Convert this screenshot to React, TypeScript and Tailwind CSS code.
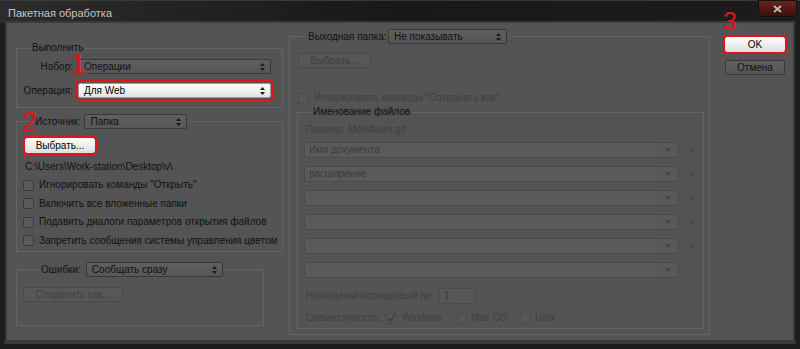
import React from "react";

const FONT = '"Liberation Sans", Arial, sans-serif';

function UpDown() {
  return (
    <svg width="5" height="8" viewBox="0 0 5 8">
      <path d="M2.5 0 L5 3 H0 Z M2.5 8 L5 5 H0 Z" fill="#1a1a1a" />
    </svg>
  );
}

function Down() {
  return (
    <svg width="6" height="4" viewBox="0 0 6 4">
      <path d="M0 0 H6 L3 4 Z" fill="#444444" />
    </svg>
  );
}

function Sel({ text, white, className }: { text: string; white?: boolean; className: string }) {
  return (
    <div
      className={
        white
          ? `h-[15px] flex items-center justify-between pl-[5px] pr-[5px] rounded-[2px] border border-[#9a9a9a] bg-linear-to-b from-[#ffffff] to-[#e2e2e2] text-black ${className}`
          : `h-[15px] flex items-center justify-between pl-[5px] pr-[5px] rounded-[2px] border border-[#383838] bg-linear-to-b from-[#5f5f5f] to-[#575757] text-[#111111] ${className}`
      }
    >
      <span className="leading-[12px] whitespace-nowrap">{text}</span>
      <UpDown />
    </div>
  );
}

function DSel({ text }: { text?: string }) {
  return (
    <div className="h-[16px] w-[375px] ml-[6px] flex items-center rounded-[2px] border border-[#4a4a4a] bg-[#5a5a5a]">
      <span className="flex-1 pl-[4px] leading-[12px] text-[#3a3a3a]">{text}</span>
      <div className="w-[20px] h-full flex items-center justify-center bg-[#585858]">
        <Down />
      </div>
    </div>
  );
}

function Check({ dim, checked }: { dim?: boolean; checked?: boolean }) {
  return (
    <div
      className={
        dim
          ? "w-[11px] h-[11px] shrink-0 rounded-[2px] border border-[#4a4a4a] bg-[#575757] flex items-center justify-center"
          : "w-[11px] h-[11px] shrink-0 rounded-[2px] border border-[#3a3a3a] bg-[#5a5a5a]"
      }
    >
      {checked && (
        <svg width="9" height="9" viewBox="0 0 9 9">
          <path d="M1.5 4.5 L3.5 7 L8 1" fill="none" stroke="#3a3a3a" strokeWidth="1.3" />
        </svg>
      )}
    </div>
  );
}

function CheckRow({ text, h }: { text: string; h: string }) {
  return (
    <div className={`flex items-center ml-[6px] ${h}`}>
      <Check />
      <span className="ml-[5px] leading-[12px] text-[#111111]">{text}</span>
    </div>
  );
}

export default function App() {
  return (
    <div
      className="relative w-[800px] h-[349px] overflow-hidden bg-[#1d1d1d] text-[10px]"
      style={{ fontFamily: FONT }}
    >
      {/* title bar */}
      <div className="h-[23px] flex justify-between bg-linear-to-r from-[#2c2c2c] via-[#181818] to-[#1c1c1c] border-t border-[#3a3a3a]">
        <div className="pl-[8px] pt-[6px] leading-[12px] text-[11px] text-[#c4c4c4]">Пакетная обработка</div>
        <div className="mr-[3px] -mt-[1px] w-[39px] h-[17px] rounded-b-[4px] border border-[#111111] bg-linear-to-b from-[#6a241b] to-[#3a0f0a] flex items-center justify-center">
          <svg width="9" height="8" viewBox="0 0 9 8">
            <path d="M1 1 L8 7 M8 1 L1 7" stroke="#b8b8b8" strokeWidth="2" />
          </svg>
        </div>
      </div>

      {/* body */}
      <div className="mx-[7px] h-[317px] bg-[#545454] flex shadow-[0_0_0_2px_#3a3a3a]">
        {/* left column */}
        <div className="w-[281px] pl-[9px] flex flex-col">
          <fieldset className="mt-[19px] w-[267px] border border-[#646464] pb-[9px]">
            <legend className="ml-[13px] px-[2px] h-[12px] leading-[12px] text-[#111111]">Выполнить</legend>
            <div className="mt-[5px] flex items-center">
              <span className="w-[56px] text-right leading-[12px] text-[#111111]">Набор:</span>
              <Sel text="Операции" className="ml-[5px] w-[193px]" />
            </div>
            <div className="mt-[9px] flex items-center">
              <span className="w-[56px] text-right leading-[12px] text-[#111111]">Операция:</span>
              <Sel text="Для Web" white className="ml-[5px] w-[193px] outline-2 outline-solid outline-offset-1 outline-[#e3121b]" />
            </div>
          </fieldset>

          <fieldset className="mt-[6px] w-[267px] border border-[#646464] pb-[1px]">
            <legend className="ml-[16px] px-[2px] h-[15px] flex items-center">
              <span className="leading-[12px] text-[#111111]">Источник:</span>
              <Sel text="Папка" className="ml-[4px] w-[103px]" />
            </legend>
            <div className="mt-[9px] ml-[8px] w-[70px] h-[15px] rounded-[2px] bg-linear-to-b from-[#ffffff] to-[#dedede] flex items-center justify-center text-black outline-2 outline-solid outline-[#e3121b]">
              <span className="leading-[12px]">Выбрать...</span>
            </div>
            <div className="mt-[8px] ml-[8px] h-[12px] leading-[12px] text-[#111111]">C:\Users\Work-station\Desktop\v\</div>
            <div className="mt-[3px] flex flex-col">
              <CheckRow text={'Игнорировать команды "Открыть"'} h="h-[18px]" />
              <CheckRow text="Включить все вложенные папки" h="h-[19px]" />
              <CheckRow text="Подавить диалоги параметров открытия файлов" h="h-[18px]" />
              <CheckRow text="Запретить сообщения системы управления цветом" h="h-[19px]" />
            </div>
          </fieldset>

          <fieldset className="mt-[10px] w-[248px] border border-[#646464] pb-[23px]">
            <legend className="ml-[22px] px-[2px] h-[15px] flex items-center">
              <span className="leading-[12px] text-[#111111]">Ошибки:</span>
              <Sel text="Сообщать сразу" className="ml-[5px] w-[137px]" />
            </legend>
            <div className="mt-[10px] ml-[6px] w-[100px] h-[15px] rounded-[2px] border border-[#4a4a4a] bg-[#575757] flex items-center justify-center">
              <span className="leading-[12px] text-[#404040]">Сохранить как...</span>
            </div>
          </fieldset>
        </div>

        {/* middle column */}
        <div className="w-[422px] flex flex-col">
          <fieldset className="ml-[1px] mt-[6px] w-[421px] border border-[#646464] pb-[5px]">
            <legend className="ml-[16px] px-[2px] h-[15px] flex items-center">
              <span className="w-[78px] whitespace-nowrap leading-[12px] text-[#111111]">Выходная папка:</span>
              <Sel text="Не показывать" className="ml-[2px] w-[119px]" />
            </legend>
            <div className="mt-[9px] ml-[8px] w-[73px] h-[15px] rounded-[2px] border border-[#4a4a4a] bg-[#575757] flex items-center justify-center">
              <span className="leading-[12px] text-[#404040]">Выбрать...</span>
            </div>
            <div className="mt-[24px] ml-[8px] h-[12px] flex items-center">
              <Check dim />
              <span className="ml-[5px] leading-[12px] text-[#404040]">Игнорировать команды "Сохранить как"</span>
            </div>

            <fieldset className="mt-[2px] ml-[7px] w-[407px] border border-[#646464] pb-[4px]">
              <legend className="ml-[13px] px-[2px] h-[12px] leading-[12px] text-[#111111]">Именование файлов</legend>
              <div className="mt-[6px] ml-[8px] h-[12px] leading-[12px] text-[#404040]">Пример: МойФайл.gif</div>
              <div className="mt-[6px] flex flex-col gap-[8px]">
                {["Имя документа", "расширение", "", "", "", ""].map((t, i) => (
                  <div key={i} className="flex items-center">
                    <DSel text={t} />
                    {i < 5 && <span className="ml-[9px] leading-[12px] text-[11px] text-[#444444]">+</span>}
                  </div>
                ))}
              </div>
              <div className="mt-[10px] ml-[8px] h-[16px] flex items-center">
                <span className="w-[133px] leading-[12px] text-[#404040]">Начальный порядковый №:</span>
                <div className="w-[37px] h-[16px] border border-[#4a4a4a] bg-[#575757] flex items-center pl-[4px]">
                  <span className="leading-[12px] text-[#3a3a3a]">1</span>
                </div>
              </div>
              <div className="mt-[8px] ml-[8px] h-[12px] flex items-center">
                <span className="w-[80px] leading-[12px] text-[#404040]">Совместимость:</span>
                <Check dim checked />
                <span className="ml-[5px] w-[55px] leading-[12px] text-[#404040]">Windows</span>
                <Check dim />
                <span className="ml-[3px] w-[49px] leading-[12px] text-[#404040]">Mac OS</span>
                <Check dim />
                <span className="ml-[4px] leading-[12px] text-[#404040]">Unix</span>
              </div>
            </fieldset>
          </fieldset>
        </div>

        {/* right column */}
        <div className="flex-1 flex flex-col pl-[15px]">
          <div className="mt-[14px] w-[60px] h-[15px] rounded-[2px] bg-linear-to-b from-[#ffffff] to-[#dedede] flex items-center justify-center text-black outline-2 outline-solid outline-[#e3121b]">
            <span className="leading-[12px]">OK</span>
          </div>
          <div className="mt-[8px] w-[60px] h-[15px] rounded-[2px] border border-[#383838] bg-linear-to-b from-[#5f5f5f] to-[#575757] flex items-center justify-center text-[#111111]">
            <span className="leading-[12px]">Отмена</span>
          </div>
        </div>
      </div>

      {/* bottom frame */}
      <div className="mx-[4px] mt-[2px] h-[2px] bg-[#3a3a3a]" />

      {/* annotations */}
      <span className="absolute left-[70px] top-[49px] text-[30px] leading-none text-[#e3121b]">1</span>
      <span className="absolute left-[22px] top-[108px] text-[28px] leading-none text-[#e3121b]">2</span>
      <span className="absolute left-[723px] top-[9px] text-[25px] leading-none text-[#e3121b]">3</span>
    </div>
  );
}
